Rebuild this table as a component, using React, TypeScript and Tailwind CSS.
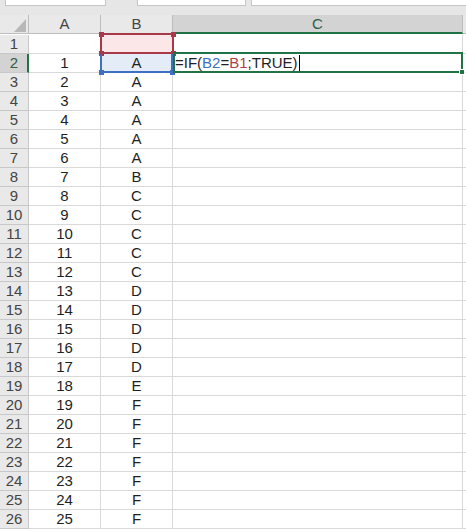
const bValues = ['', 'A', 'A', 'A', 'A', 'A', 'A', 'B', 'C', 'C', 'C', 'C', 'C', 'D', 'D', 'D', 'D', 'D', 'E', 'F', 'F', 'F', 'F', 'F', 'F', 'F'];

function Handle({ className }: { className: string }) {
    return <div className={`absolute w-[5px] h-[5px] ${className}`}></div>;
}

export default function App() {
    const rows = bValues.map((b, i) => ({ n: i + 1, a: i === 0 ? '' : String(i), b }));

    return (
        <div className="relative w-[466px] h-[532px] overflow-hidden bg-white font-['Liberation_Sans',Arial,sans-serif] text-[15px] text-[#1f1f1f]">
            {/* Top strip: name box + formula bar edges */}
            <div className="h-[15px] bg-[#e6e6e6] flex items-start">
                <div className="ml-[5px] w-[101px] h-[6px] bg-white border-x border-b border-[#c6c6c6]"></div>
                <div className="ml-[31px] w-[109px] h-[6px] bg-white border-x border-b border-[#c6c6c6]"></div>
                <div className="ml-[5px] flex-1 h-[6px] bg-white border-l border-b border-[#c6c6c6]"></div>
            </div>

            {/* Column headers */}
            <div className="flex h-[19px] bg-[#e9e9e9] leading-[18px] text-[#444]">
                <div className="relative w-[29px] shrink-0 border-r border-b border-[#bdbdbd]">
                    <svg className="absolute right-[2px] bottom-[1px]" width="12" height="13" viewBox="0 0 12 13">
                        <polygon points="12,0 12,13 0,13" fill="#b8b8b8" />
                    </svg>
                </div>
                <div className="w-[72px] shrink-0 border-r border-b border-[#bdbdbd] text-center">A</div>
                <div className="w-[72px] shrink-0 border-r border-b border-[#bdbdbd] text-center">B</div>
                <div className="w-[290px] shrink-0 border-r border-[#bdbdbd] border-b-2 border-b-[#217346] bg-[#d3d3d3] text-center text-[#2f5d45]">C</div>
                <div className="flex-1 border-b border-[#bdbdbd]"></div>
            </div>

            {/* Rows */}
            {rows.map((r) => (
                <div key={r.n} className={`flex leading-[18px] ${r.n === 1 ? 'h-[20px] pt-px' : 'h-[19px]'}`}>
                    <div
                        className={`w-[29px] shrink-0 border-b border-[#c8c8c8] text-center ${
                            r.n === 2
                                ? 'bg-[#d3d3d3] text-[#2f5d45] border-r-2 border-r-[#217346] pl-px'
                                : 'bg-[#e9e9e9] text-[#444] border-r'
                        }`}
                    >
                        {r.n}
                    </div>
                    <div className="w-[72px] shrink-0 border-r border-b border-[#d9d9d9] text-center">{r.a}</div>
                    <div
                        className={`w-[72px] shrink-0 border-r border-b border-[#d9d9d9] text-center ${
                            r.n === 1 ? 'bg-[#fbe6e8]' : r.n === 2 ? 'bg-[#e4ecf8]' : ''
                        }`}
                    >
                        {r.b}
                    </div>
                    <div className="w-[290px] shrink-0 border-r border-b border-[#d9d9d9] pl-[2px] whitespace-nowrap">
                        {r.n === 2 && (
                            <span className="relative">
                                =IF(<span className="text-[#3d6fc2]">B2</span>=<span className="text-[#b03f4c]">B1</span>;TRUE)
                                <span className="absolute right-[-2px] top-[1px] w-px h-[16px] bg-black"></span>
                            </span>
                        )}
                    </div>
                    <div className="flex-1 border-b border-[#d9d9d9]"></div>
                </div>
            ))}

            {/* Formula reference B1 (red) */}
            <div className="absolute left-[100px] top-[33px] w-[74px] h-[21px] border-2 border-[#a8394a]"></div>
            <Handle className="left-[99px] top-[32px] bg-[#a8394a]" />
            <Handle className="left-[171px] top-[32px] bg-[#a8394a]" />
            <Handle className="left-[99px] top-[51px] bg-[#a8394a]" />
            <Handle className="left-[171px] top-[51px] bg-[#a8394a]" />

            {/* Formula reference B2 (blue) */}
            <div className="absolute left-[100px] top-[54px] w-[73px] h-[19px] border-x-2 border-b-2 border-[#3d6fc2]"></div>
            <Handle className="left-[99px] top-[70px] bg-[#3d6fc2]" />
            <Handle className="left-[170px] top-[70px] bg-[#3d6fc2]" />

            {/* Active cell C2 (green) */}
            <div className="absolute left-[173px] top-[52px] w-[290px] h-[21px] border-2 border-[#217346]"></div>
            <div className="absolute left-[459px] top-[69px] w-[6px] h-[6px] bg-[#217346] border border-white"></div>
        </div>
    );
}
